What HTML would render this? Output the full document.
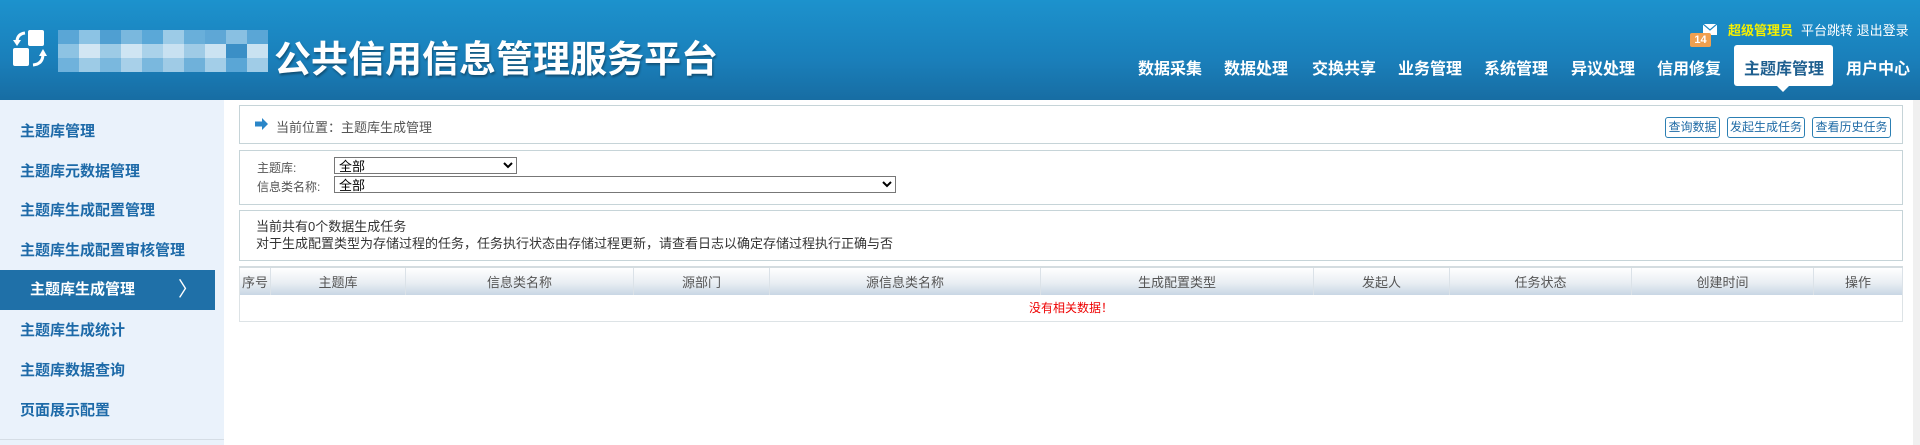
<!DOCTYPE html>
<html><head><meta charset="utf-8"><style>
*{margin:0;padding:0;box-sizing:border-box}
body{width:1920px;height:445px;overflow:hidden;background:#fff;font-family:"Liberation Sans","Noto Sans CJK SC",sans-serif;font-size:12px;color:#333;position:relative}
.hd{position:absolute;left:0;top:0;width:1920px;height:100px;background:linear-gradient(#1c92cd,#1a7fba 60%,#176da3)}
.title{position:absolute;left:274px;top:29px;font-size:37px;font-weight:bold;color:#fff;letter-spacing:0;text-shadow:1px 2px 2px rgba(0,0,0,.35);white-space:nowrap;transform-origin:0 0;transform:scaleX(1.0)}
.blur{position:absolute;left:58px;top:30px;width:210px;height:42px;display:flex;flex-wrap:wrap}
.blur i{display:block;width:21px;height:14px}
.nav a{position:absolute;top:55px;font-size:16px;font-weight:bold;color:#fff;white-space:nowrap;text-decoration:none;letter-spacing:0}
.act{position:absolute;left:1734px;top:45px;width:99px;height:41px;background:#fff;border-radius:3px}
.act:after{content:"";position:absolute;left:43px;bottom:-6px;border:6px solid transparent;border-top-color:#fff;border-bottom:0}
.tr{position:absolute;top:20px;font-size:13px;color:#fff;white-space:nowrap}
.side{position:absolute;left:0;top:100px;width:224px;height:345px;background:#eaf2fb}
.side div{position:absolute;left:20px;font-size:15px;font-weight:bold;color:#1d6aa8;white-space:nowrap}
.side .on{left:0;top:170px;width:215px;height:40px;background:#1f70a8;color:#fff;padding-left:30px;line-height:40px}
.box{position:absolute;left:239px;width:1664px;border:1px solid #c6d4d8;background:#fff}
.btn{position:absolute;top:11px;height:21px;border:1px solid #2c7fb3;border-radius:3px;color:#1e6aa5;font-size:12px;line-height:19px;text-align:center}
select{position:absolute;height:17px;font-size:13px;border:1px solid #777;background:#fff;color:#000;font-family:inherit}
table{position:absolute;left:239px;top:266px;width:1664px;border-collapse:collapse;border:1px solid #dde3e6}
th{height:28px;font-weight:normal;color:#555;font-size:13px;background:linear-gradient(#fff,#e9eef3 55%,#c8d6e4);border-right:1px solid #dbe2e8;border-top:2px solid #d4dce0}
td{height:26px;text-align:center;color:#e00;font-size:12px}
</style></head><body>
<div class="hd">
<svg style="position:absolute;left:13px;top:30px" width="36" height="38" viewBox="0 0 36 38"><rect x="15" y="0" width="16" height="16" rx="2" fill="#fff"/><rect x="0" y="18" width="16" height="18" rx="2" fill="#fff"/><path d="M12 3 Q4 4 4 12" stroke="#fff" stroke-width="3" fill="none"/><path d="M0 10 L4 16 L8 10Z" fill="#fff"/><path d="M20 35 Q30 34 30 24" stroke="#fff" stroke-width="3" fill="none"/><path d="M26 26 L30 19 L34 26Z" fill="#fff"/></svg>
<div class="blur">
<i style="background:#5aa6d6"></i><i style="background:#8cc3e4"></i><i style="background:#4f9fd2"></i><i style="background:#7ab8de"></i><i style="background:#5aa8d8"></i><i style="background:#9ccbe7"></i><i style="background:#69afda"></i><i style="background:#5ea7d6"></i><i style="background:#89c0e2"></i><i style="background:#5aa6d6"></i>
<i style="background:#8dc3e3"></i><i style="background:#d2e6f3"></i><i style="background:#9dcbe6"></i><i style="background:#cfe5f3"></i><i style="background:#aad2ea"></i><i style="background:#c8e1f1"></i><i style="background:#9fcbe6"></i><i style="background:#cbe3f2"></i><i style="background:#3b8fc6"></i><i style="background:#c9e2f1"></i>
<i style="background:#6fb2dc"></i><i style="background:#9dcbe6"></i><i style="background:#7ab8de"></i><i style="background:#a8d0e9"></i><i style="background:#7ab8de"></i><i style="background:#9fcbe6"></i><i style="background:#6fb1da"></i><i style="background:#a3cee8"></i><i style="background:#5aa6d6"></i><i style="background:#a0cce7"></i>
</div>
<div class="title">公共信用信息管理服务平台</div>
<svg style="position:absolute;left:1703px;top:24px" width="14" height="11" viewBox="0 0 14 11"><rect width="14" height="11" fill="#fff"/><path d="M0 0 L7 6 L14 0" stroke="#1a86c3" stroke-width="1.2" fill="none"/></svg>
<div style="position:absolute;left:1690px;top:33px;width:21px;height:14px;background:#f0a050;color:#fff;font-size:11px;font-weight:bold;text-align:center;line-height:14px;border-radius:2px">14</div>
<div class="tr" style="left:1728px;color:#f6f000;font-weight:bold">超级管理员</div>
<div class="tr" style="left:1801px">平台跳转 退出登录</div>
<div class="act"></div>
<div class="nav">
<a style="left:1138px">数据采集</a><a style="left:1224px">数据处理</a><a style="left:1312px">交换共享</a><a style="left:1398px">业务管理</a><a style="left:1484px">系统管理</a><a style="left:1571px">异议处理</a><a style="left:1657px">信用修复</a><a style="left:1744px;color:#1f5f8f">主题库管理</a><a style="left:1846px">用户中心</a>
</div>
</div>
<div class="side">
<div style="top:20px">主题库管理</div>
<div style="top:60px">主题库元数据管理</div>
<div style="top:99px">主题库生成配置管理</div>
<div style="top:139px">主题库生成配置审核管理</div>
<div class="on">主题库生成管理<span style="position:absolute;left:178px;top:0;font-weight:normal;font-size:20px">〉</span></div>
<div style="top:219px">主题库生成统计</div>
<div style="top:259px">主题库数据查询</div>
<div style="top:299px">页面展示配置</div>
<div style="top:339px;left:0;width:224px;height:1px;background:#d5dde5"></div>
</div>
<div class="box" style="top:105px;height:39px">
<svg style="position:absolute;left:15px;top:12px" width="13" height="12" viewBox="0 0 13 12"><path d="M0 3.5 H7 V0 L13 6 L7 12 V8.5 H0Z" fill="#2a86c8"/></svg>
<div style="position:absolute;left:36px;top:11px;font-size:13px;color:#555">当前位置：主题库生成管理</div>
<div class="btn" style="left:1425px;width:55px">查询数据</div>
<div class="btn" style="left:1487px;width:78px">发起生成任务</div>
<div class="btn" style="left:1572px;width:79px">查看历史任务</div>
</div>
<div class="box" style="top:150px;height:55px">
<div style="position:absolute;left:17px;top:8px;font-size:12px;color:#555">主题库:</div>
<div style="position:absolute;left:17px;top:27px;font-size:12px;color:#555">信息类名称:</div>
<select style="left:94px;top:6px;width:183px"><option>全部</option></select>
<select style="left:94px;top:25px;width:562px"><option>全部</option></select>
</div>
<div class="box" style="top:210px;height:51px">
<div style="position:absolute;left:16px;top:7px;font-size:13px;line-height:17px">当前共有0个数据生成任务<br>对于生成配置类型为存储过程的任务，任务执行状态由存储过程更新，请查看日志以确定存储过程执行正确与否</div>
</div>
<table><tr>
<th style="width:31px">序号</th><th style="width:135px">主题库</th><th style="width:228px">信息类名称</th><th style="width:136px">源部门</th><th style="width:271px">源信息类名称</th><th style="width:273px">生成配置类型</th><th style="width:136px">发起人</th><th style="width:182px">任务状态</th><th style="width:182px">创建时间</th><th>操作</th>
</tr><tr><td colspan="10">没有相关数据！</td></tr></table>
<div style="position:absolute;left:1913px;top:100px;width:7px;height:345px;background:#f0f0f0"></div>
</body></html>
